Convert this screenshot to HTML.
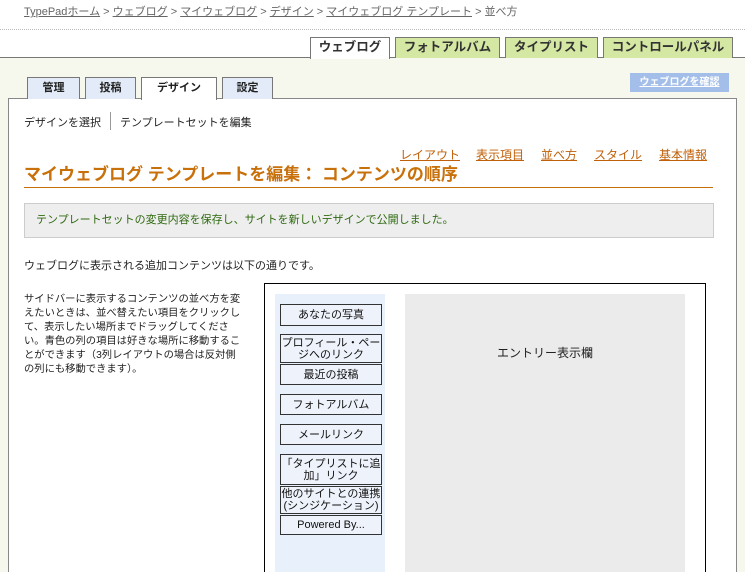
<!DOCTYPE html>
<html><head><meta charset="utf-8"><style>
*{margin:0;padding:0;box-sizing:border-box}
html,body{width:745px;height:572px;overflow:hidden}
body{background:#fff;font-family:"Liberation Sans","Noto Sans CJK JP",sans-serif;position:relative;font-size:11px;color:#222}
.a{position:absolute}
.bc{left:24px;top:3px;color:#666;font-size:11px;white-space:nowrap}
.bc u{color:#666}
.dot{left:0;top:29px;width:745px;border-top:1px dotted #bbb}
.bg{left:0;top:57px;width:745px;height:515px;background:#f6f8ee;border-top:1px solid #777}
.tt{top:37px;height:21px;border:1px solid #777;border-bottom:none;background:#d5e8a3;font-weight:bold;font-size:12.5px;text-align:center;line-height:19px;color:#333}
.st{top:77px;height:22px;border:1px solid #777;border-bottom:none;background:#e3ebf8;font-weight:bold;font-size:11px;text-align:center;line-height:21px;color:#222}
.box{left:8px;top:98px;width:729px;height:474px;background:#fff;border:1px solid #888;border-bottom:none}
.lk{top:146px;color:#c0600a;font-size:12px;text-decoration:underline}
.it{left:280px;width:102px;border:1px solid #333;background:#eef3fb;text-align:center;font-size:11px;line-height:12px;display:flex;align-items:center;justify-content:center;color:#111}
</style></head><body>
<div class="a bc"><u>TypePadホーム</u> &gt; <u>ウェブログ</u> &gt; <u>マイウェブログ</u> &gt; <u>デザイン</u> &gt; <u>マイウェブログ テンプレート</u> &gt; 並べ方</div>
<div class="a dot"></div>
<div class="a bg"></div>
<div class="a tt" style="left:310px;width:80px;background:#fff;height:22px">ウェブログ</div>
<div class="a tt" style="left:395px;width:105px">フォトアルバム</div>
<div class="a tt" style="left:505px;width:93px">タイプリスト</div>
<div class="a tt" style="left:603px;width:130px">コントロールパネル</div>
<div class="a" style="left:630px;top:73px;width:99px;height:19px;background:#a3bfe9;color:#fff;font-weight:bold;font-size:10px;text-align:center;line-height:19px;text-decoration:underline">ウェブログを確認</div>
<div class="a box"></div>
<div class="a st" style="left:27px;width:53px">管理</div>
<div class="a st" style="left:85px;width:51px">投稿</div>
<div class="a st" style="left:141px;width:76px;background:#fff;height:23px">デザイン</div>
<div class="a st" style="left:222px;width:51px">設定</div>
<div class="a" style="left:24px;top:114px;font-size:11px">デザインを選択</div>
<div class="a" style="left:110px;top:112px;height:18px;border-left:1px solid #999"></div>
<div class="a" style="left:120px;top:114px;font-size:11px">テンプレートセットを編集</div>
<div class="a lk" style="left:400px">レイアウト</div>
<div class="a lk" style="left:476px">表示項目</div>
<div class="a lk" style="left:541px">並べ方</div>
<div class="a lk" style="left:594px">スタイル</div>
<div class="a lk" style="left:659px">基本情報</div>
<div class="a" style="left:24px;top:160px;color:#c8700a;font-weight:bold;font-size:17px;white-space:nowrap">マイウェブログ テンプレートを編集： コンテンツの順序</div>
<div class="a" style="left:24px;top:187px;width:689px;border-top:1px solid #c8700a"></div>
<div class="a" style="left:24px;top:203px;width:690px;height:35px;background:#eee;border:1px solid #ccc;color:#2f6a10;font-size:11px;line-height:33px;padding-left:11px">テンプレートセットの変更内容を保存し、サイトを新しいデザインで公開しました。</div>
<div class="a" style="left:24px;top:257px;font-size:11px">ウェブログに表示される追加コンテンツは以下の通りです。</div>
<div class="a" style="left:24px;top:293px;width:218px;font-size:10.3px;line-height:14px">サイドバーに表示するコンテンツの並べ方を変えたいときは、並べ替えたい項目をクリックして、表示したい場所までドラッグしてください。青色の列の項目は好きな場所に移動することができます（3列レイアウトの場合は反対側の列にも移動できます）。</div>
<div class="a" style="left:264px;top:283px;width:442px;height:300px;border:1px solid #000;background:#fff"></div>
<div class="a" style="left:275px;top:294px;width:110px;height:280px;background:#e8f0fb"></div>
<div class="a" style="left:405px;top:294px;width:280px;height:280px;background:#ebebeb"></div>
<div class="a" style="left:405px;top:344px;width:280px;text-align:center;font-size:12px">エントリー表示欄</div>
<div class="a it" style="top:304px;height:22px">あなたの写真</div>
<div class="a it" style="top:334px;height:29px">プロフィール・ページへのリンク</div>
<div class="a it" style="top:364px;height:21px">最近の投稿</div>
<div class="a it" style="top:394px;height:21px">フォトアルバム</div>
<div class="a it" style="top:424px;height:21px">メールリンク</div>
<div class="a it" style="top:454px;height:31px">「タイプリストに追加」リンク</div>
<div class="a it" style="top:486px;height:28px">他のサイトとの連携(シンジケーション)</div>
<div class="a it" style="top:515px;height:20px">Powered By...</div>
</body></html>
